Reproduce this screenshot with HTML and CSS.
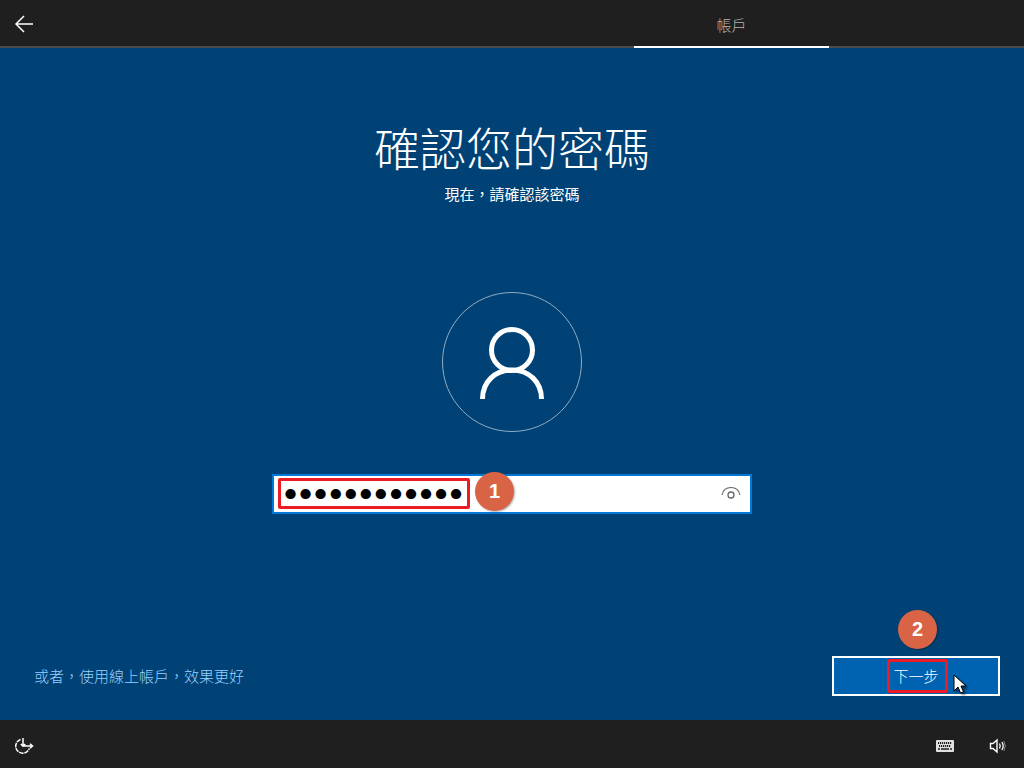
FILE: index.html
```html
<!DOCTYPE html>
<html lang="zh-Hant">
<head>
    <meta charset="UTF-8">
    <meta name="viewport" content="width=device-width, initial-scale=1.0">
    <title>確認您的密碼</title>
    <link rel="stylesheet" href="styles.css">
</head>
<body>

    <header class="topbar">
        <button class="back" type="button" aria-label="返回">
            <svg width="20" height="18" viewBox="0 0 20 18">
                <path d="M19 9H2M10 1L2 9l8 8" fill="none" stroke="#fff" stroke-width="1.500"/>
            </svg>
        </button>
        <div class="tab">帳戶</div>
    </header>

    <form class="page">
        <h1>確認您的密碼</h1>
        <p class="subtitle">現在，請確認該密碼</p>

        <div class="avatar">
            <svg width="66" height="74" viewBox="0 0 66 74">
                <circle cx="33" cy="25" r="20.500" fill="none" stroke="#fff" stroke-width="5"/>
                <path d="M3.500 74C3.500 57 16 45 33 45S62.500 57 62.500 74" fill="none" stroke="#fff" stroke-width="5"/>
            </svg>
        </div>

        <div class="field">
            <input class="password" type="password" value="abcdefghijkl" aria-label="確認密碼">
            <button class="reveal" type="button" aria-label="顯示密碼">
                <svg width="20" height="16" viewBox="0 0 20 16">
                    <path d="M1 9C2 4 5.500 1.500 10 1.500S18 4 19 9" fill="none" stroke="#666" stroke-width="1.200"/>
                    <circle cx="10" cy="9" r="3" fill="none" stroke="#666" stroke-width="1.300"/>
                </svg>
            </button>
            <span class="mark mark-password"></span>
            <span class="step step-one">1</span>
        </div>

        <div class="actions">
            <a class="online" href="#">或者，使用線上帳戶，效果更好</a>
            <div class="next-wrap">
                <button class="next" type="button">下一步</button>
                <span class="mark mark-next"></span>
                <span class="step step-two">2</span>
                <svg class="cursor" width="14" height="21" viewBox="0 0 14 21">
                    <path d="M1 1v16l4-4 2.500 6 3-1.200-2.500-5.800h5z" fill="#fff" stroke="#000" stroke-width="1"/>
                </svg>
            </div>
        </div>
    </form>

    <footer class="bottombar">
        <button class="tool tool-access" type="button" aria-label="輕鬆存取">
            <svg width="20" height="18" viewBox="0 0 20 18">
                <path d="M6.500 2.500A7 7 0 1 0 15.300 11.500" fill="none" stroke="#fff" stroke-width="1.500" stroke-dasharray="4.500 .8"/>
                <path d="M9 1v8h9M6.800 7L9 9.200 11.200 7M16 6.800L18.500 9 16 11.200" fill="none" stroke="#fff" stroke-width="1.500"/>
            </svg>
        </button>
        <div class="tools">
            <button class="tool" type="button" aria-label="鍵盤">
                <svg width="18" height="12" viewBox="0 0 18 12">
                    <rect width="18" height="12" rx="1" fill="#e0e0e0"/>
                    <path d="M2 3h14M3 6h12" stroke="#1f1f1f" stroke-width="2" stroke-dasharray="1.200 .8"/>
                    <path d="M2 9h2M5 9h8M14 9h2" stroke="#1f1f1f" stroke-width="1.500"/>
                </svg>
            </button>
            <button class="tool" type="button" aria-label="音量">
                <svg width="18" height="16" viewBox="0 0 18 16">
                    <path d="M1.500 5.500v5h2.500l4 3.500V2L4 5.500z" fill="none" stroke="#fff" stroke-width="1.400"/>
                    <path d="M10.500 5.500q1.500 2.500 0 5M12.800 4q2.800 4 0 8" fill="none" stroke="#fff" stroke-width="1.300"/>
                    <path d="M14.800 3q3 5 0 10" fill="none" stroke="#888" stroke-width="1"/>
                </svg>
            </button>
        </div>
    </footer>

</body>
</html>
```
FILE: styles.css
```css
* {
    box-sizing: border-box;
}

body {
    font-family: "Noto Sans CJK TC", sans-serif;
    font-size: 15px;
    font-weight: 300;
    line-height: 20px;
    margin: 0;
    min-height: 100vh;
    display: flex;
    flex-direction: column;
    background-color: #004275;
    color: white;
}

button {
    font: inherit;
    color: inherit;
    background: none;
    border: 0;
    padding: 0;
}

svg {
    display: block;
}

/* Top bar */
.topbar {
    display: flex;
    justify-content: space-between;
    height: 48px;
    padding-right: 195px;
    background-color: #1f1f1f;
    box-shadow: inset 0 -2px #4c4c4c;
}

.back {
    width: 48px;
    display: flex;
    align-items: center;
    justify-content: center;
}

.tab {
    width: 195px;
    padding-top: 15px;
    text-align: center;
    color: #b4b4b4;
    border-bottom: 2px solid white;
}

/* Main page */
.page {
    flex: 1;
    display: flex;
    flex-direction: column;
    align-items: center;
    padding: 68px 24px 24px;
}

h1 {
    margin: 0;
    font-size: 46px;
    font-weight: 300;
    line-height: 60px;
}

.subtitle {
    margin: 8px 0 0;
    font-weight: 400;
}

.avatar {
    width: 140px;
    height: 140px;
    margin-top: 88px;
    display: flex;
    align-items: center;
    justify-content: center;
    border: 1px solid #8fadc5;
    border-radius: 50%;
}

.field {
    position: relative;
    display: flex;
    align-items: center;
    width: 480px;
    max-width: 100%;
    height: 40px;
    margin-top: 42px;
    border: 2px solid #0078d7;
    background-color: white;
}

.password {
    flex: 1;
    min-width: 0;
    height: 36px;
    padding: 0 9px 2px;
    border: 0;
    outline: 0;
    background: none;
    color: black;
    font-family: "Liberation Serif", serif;
    font-size: 43px;
}

.reveal {
    padding: 0 9px;
}

.actions {
    width: 100%;
    margin-top: auto;
    display: flex;
    align-items: center;
    justify-content: space-between;
}

.online {
    padding-left: 10px;
    color: #99d1ff;
    text-decoration: none;
}

.next-wrap {
    position: relative;
}

.next {
    display: block;
    width: 168px;
    height: 40px;
    border: 2px solid white;
    background-color: #0063b1;
}

/* Step marks over the controls */
.mark {
    position: absolute;
    border: 3px solid #ed1c24;
    border-radius: 2px;
    pointer-events: none;
}

.mark-password {
    left: 4px;
    top: 2px;
    width: 192px;
    height: 31px;
}

.mark-next {
    left: 55px;
    top: 3px;
    width: 61px;
    height: 34px;
}

.step {
    position: absolute;
    width: 39px;
    height: 39px;
    border-radius: 50%;
    background-color: #d96445;
    box-shadow: 1px 1px 2px rgba(0, 0, 0, 0.3);
    font-family: "Liberation Sans", sans-serif;
    font-size: 20px;
    font-weight: bold;
    line-height: 38px;
    text-align: center;
}

.step-one {
    left: 201px;
    top: -4px;
}

.step-two {
    left: 66px;
    top: -46px;
}

.cursor {
    position: absolute;
    left: 121px;
    top: 18px;
    filter: drop-shadow(2px 2px 1px rgba(0, 0, 0, 0.5));
}

/* Bottom bar */
.bottombar {
    display: flex;
    justify-content: space-between;
    height: 48px;
    padding-top: 3px;
    background-color: #1f1f1f;
}

.tools {
    display: flex;
}

.tool {
    width: 53px;
    display: flex;
    align-items: center;
    justify-content: center;
}

.tool-access {
    width: 48px;
}
```
